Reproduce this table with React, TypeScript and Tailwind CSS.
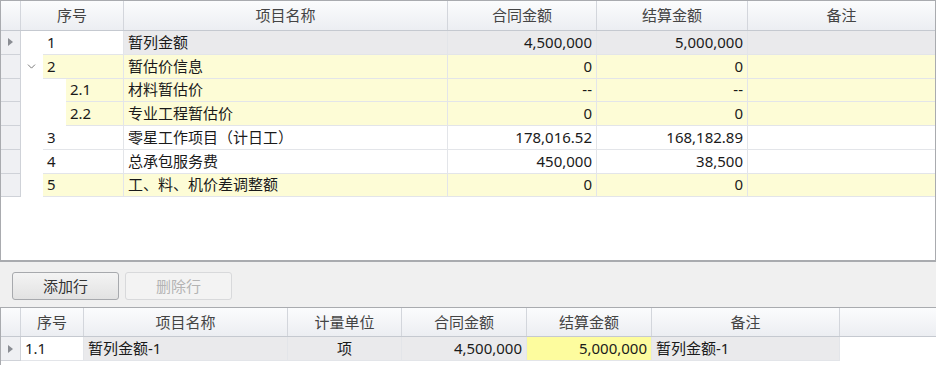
import { ChevronDown } from "lucide-react";

type Row = {
  no: string;
  name: string;
  contract: string;
  settle: string;
  level: number;
  tone: "sel" | "yellow" | "white";
  expand?: boolean;
  current?: boolean;
};

const rows: Row[] = [
  { no: "1", name: "暂列金额", contract: "4,500,000", settle: "5,000,000", level: 0, tone: "sel", current: true },
  { no: "2", name: "暂估价信息", contract: "0", settle: "0", level: 0, tone: "yellow", expand: true },
  { no: "2.1", name: "材料暂估价", contract: "--", settle: "--", level: 1, tone: "yellow" },
  { no: "2.2", name: "专业工程暂估价", contract: "0", settle: "0", level: 1, tone: "yellow" },
  { no: "3", name: "零星工作项目（计日工）", contract: "178,016.52", settle: "168,182.89", level: 0, tone: "white" },
  { no: "4", name: "总承包服务费", contract: "450,000", settle: "38,500", level: 0, tone: "white" },
  { no: "5", name: "工、料、机价差调整额", contract: "0", settle: "0", level: 0, tone: "yellow" },
];

const toneBg: Record<string, string> = {
  sel: "bg-[#eaeaec]",
  yellow: "bg-[#fdfcd6]",
  white: "bg-white",
};

function RowMarker({ show }: { show?: boolean }) {
  return (
    <div className="w-[20px] shrink-0 h-full bg-[#eff0f3] border-r border-b border-[#cfd2d8] flex items-center justify-center">
      {show && (
        <svg width="5" height="8" viewBox="0 0 5 8">
          <path d="M0 0 L5 4 L0 8 Z" fill="#8a8d93" />
        </svg>
      )}
    </div>
  );
}

function HeadCell({ w, children }: { w: string; children?: React.ReactNode }) {
  return (
    <div className={`${w} shrink-0 h-full border-r border-[#d3d6dc] flex items-center justify-center text-[#444]`}>
      {children}
    </div>
  );
}

export default function App() {
  return (
    <div className="w-[936px] h-[365px] overflow-hidden bg-[#f0f0f0] font-['Noto_Sans','Noto_Sans_CJK_SC',sans-serif] text-[15px] text-[#1a1a1a] leading-none">
      {/* top grid */}
      <div className="h-[262px] bg-white border border-b-2 border-[#a9abaf] flex flex-col">
        <div className="h-[30px] shrink-0 flex border-b border-[#c5c9d0] bg-linear-to-b from-[#fbfcfd] to-[#eceef2]">
          <HeadCell w="w-[20px]" />
          <HeadCell w="w-[103px]">序号</HeadCell>
          <HeadCell w="w-[324px]">项目名称</HeadCell>
          <HeadCell w="w-[149px]">合同金额</HeadCell>
          <HeadCell w="w-[151px]">结算金额</HeadCell>
          <div className="flex-1 h-full flex items-center justify-center text-[#444]">备注</div>
        </div>

        {rows.map((r) => (
          <div key={r.no} className="h-[23.75px] shrink-0 flex">
            <RowMarker show={r.current} />
            <div className={`${r.level === 1 ? "w-[45px]" : "w-[22px]"} shrink-0 h-full bg-white flex items-center justify-center`}>
              {r.expand && <ChevronDown size={13} strokeWidth={1.6} className="text-[#666] mr-[2px]" />}
            </div>
            <div
              className={`${r.level === 1 ? "w-[58px]" : "w-[81px]"} shrink-0 h-full border-r border-b border-[#e3e5e9] ${r.current ? "bg-white" : toneBg[r.tone]} flex items-center px-[4px]`}
            >
              {r.no}
            </div>
            <div className={`w-[324px] shrink-0 h-full border-r border-b border-[#e3e5e9] ${toneBg[r.tone]} flex items-center px-[4px]`}>
              {r.name}
            </div>
            <div className={`w-[149px] shrink-0 h-full border-r border-b border-[#e3e5e9] ${toneBg[r.tone]} flex items-center justify-end px-[4px]`}>
              {r.contract}
            </div>
            <div className={`w-[151px] shrink-0 h-full border-r border-b border-[#e3e5e9] ${toneBg[r.tone]} flex items-center justify-end px-[4px]`}>
              {r.settle}
            </div>
            <div className={`flex-1 h-full border-b border-[#e3e5e9] ${toneBg[r.tone]}`} />
          </div>
        ))}
      </div>

      {/* toolbar */}
      <div className="h-[45px] flex items-start gap-[6px] pl-[12px] pt-[10px]">
        <button className="w-[107px] h-[28px] rounded-[3px] border border-[#a7a9ad] bg-linear-to-b from-[#f4f4f4] to-[#e2e2e2] text-[#333] flex items-center justify-center">
          添加行
        </button>
        <button className="w-[107px] h-[28px] rounded-[3px] border border-[#d8d9db] bg-[#f3f3f3] text-[#b4b4b4] flex items-center justify-center">
          删除行
        </button>
      </div>

      {/* bottom grid */}
      <div className="h-[58px] bg-white border-t border-l border-[#a9abaf] flex flex-col">
        <div className="h-[29px] shrink-0 flex border-b border-[#c5c9d0] bg-linear-to-b from-[#fbfcfd] to-[#eceef2]">
          <HeadCell w="w-[20px]" />
          <HeadCell w="w-[63px]">序号</HeadCell>
          <HeadCell w="w-[204px]">项目名称</HeadCell>
          <HeadCell w="w-[114px]">计量单位</HeadCell>
          <HeadCell w="w-[125px]">合同金额</HeadCell>
          <HeadCell w="w-[125px]">结算金额</HeadCell>
          <HeadCell w="w-[188px]">备注</HeadCell>
          <div className="flex-1 h-full" />
        </div>
        <div className="h-[24px] shrink-0 flex">
          <RowMarker show />
          <div className="w-[63px] shrink-0 h-full bg-white border-r border-b border-[#e3e5e9] flex items-center px-[4px]">1.1</div>
          <div className="w-[204px] shrink-0 h-full bg-[#eaeaec] border-r border-b border-[#e3e5e9] flex items-center px-[4px]">暂列金额-1</div>
          <div className="w-[114px] shrink-0 h-full bg-[#eaeaec] border-r border-b border-[#e3e5e9] flex items-center justify-center">项</div>
          <div className="w-[125px] shrink-0 h-full bg-[#eaeaec] border-r border-b border-[#e3e5e9] flex items-center justify-end px-[4px]">4,500,000</div>
          <div className="w-[125px] shrink-0 h-full bg-[#fdfc9e] border-r border-b border-[#e3e5e9] flex items-center justify-end px-[4px]">5,000,000</div>
          <div className="w-[188px] shrink-0 h-full bg-[#eaeaec] border-r border-b border-[#e3e5e9] flex items-center px-[4px]">暂列金额-1</div>
          <div className="flex-1 h-full" />
        </div>
      </div>
    </div>
  );
}
